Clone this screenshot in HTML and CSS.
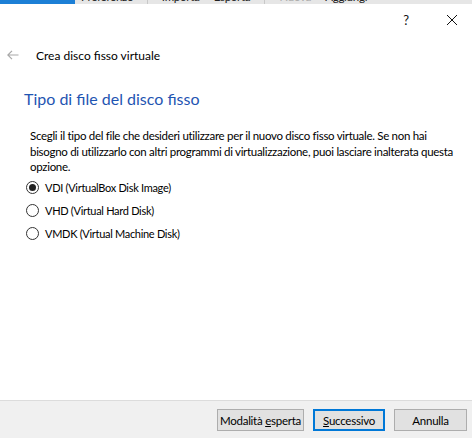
FILE: index.html
```html
<!DOCTYPE html>
<html lang="it">
<head>
<meta charset="utf-8">
<title>Crea disco fisso virtuale</title>
<link rel="stylesheet" href="styles.css">
</head>
<body>
<div class="window">
  <div class="behind">
    <div class="behind-blue"></div>
    <div class="behind-gray"><span>Preferenze</span><span class="sep"></span><span>Importa</span><span>Esporta</span><span class="sep"></span><span class="dim">Nuova</span><span>Aggiungi</span></div>
  </div>
  <div class="titlebar">
    <span class="help">?</span>
    <svg class="close" width="12" height="12" viewBox="0 0 12 12"><path d="M1 1 L11 11 M11 1 L1 11" stroke="#111" stroke-width="1" fill="none"/></svg>
  </div>
  <div class="navrow">
    <svg class="back" width="12" height="10" viewBox="0 0 12 10"><path d="M0.5 5 H11.5 M5 0.8 L0.8 5 L5 9.2" stroke="#a8a8a8" stroke-width="1.2" fill="none"/></svg>
    <span class="navtitle">Crea disco fisso virtuale</span>
  </div>
  <div class="content">
    <h1 class="heading">Tipo di file del disco fisso</h1>
    <p class="desc">Scegli il tipo del file che desideri utilizzare per il nuovo disco fisso virtuale. Se non hai<br>bisogno di utilizzarlo con altri programmi di virtualizzazione, puoi lasciare inalterata questa<br>opzione.</p>
    <div class="options">
      <label class="opt"><span class="radio checked"></span>VDI (VirtualBox Disk Image)</label>
      <label class="opt"><span class="radio"></span>VHD (Virtual Hard Disk)</label>
      <label class="opt"><span class="radio"></span>VMDK (Virtual Machine Disk)</label>
    </div>
  </div>
  <div class="footer">
    <button class="btn btn-expert">Modalità <u>e</u>sperta</button>
    <button class="btn btn-default"><u>S</u>uccessivo</button>
    <button class="btn btn-cancel">Annulla</button>
  </div>
</div>
</body>
</html>
```
FILE: styles.css
```css
* { box-sizing: border-box; }
html, body { margin: 0; padding: 0; }
body {
  width: 472px;
  height: 438px;
  overflow: hidden;
  background: #ffffff;
  font-family: "Segoe UI", Lato, "Noto Sans", "Liberation Sans", sans-serif;
  font-size: 11.5px;
  letter-spacing: -0.25px;
  color: #000;
}
.window {
  display: flex;
  flex-direction: column;
  height: 438px;
}
.behind {
  display: flex;
  height: 4px;
  overflow: hidden;
  flex: none;
}
.behind-blue { width: 75px; background: #1c7fd6; }
.behind-gray {
  flex: 1;
  background: #e6e6e6;
  display: flex;
  gap: 14px;
  padding-left: 6px;
  line-height: 12px;
  white-space: nowrap;
}
.behind-gray span { margin-top: -9px; color: #222; }
.behind-gray .dim { color: #aaa; }
.behind-gray .sep { width: 1px; background: #c8c8c8; margin-top: 0; height: 4px; }
.titlebar {
  height: 32px;
  flex: none;
  display: flex;
  align-items: center;
  justify-content: flex-end;
  padding-right: 14px;
  gap: 37px;
}
.help { font-size: 13px; color: #111; letter-spacing: 0; }
.close { display: block; }
.navrow {
  display: flex;
  align-items: center;
  height: 26px;
  margin-top: 6px;
  padding-left: 7px;
  flex: none;
}
.back { display: block; margin-right: 17px; }
.navtitle { font-size: 12px; letter-spacing: 0; color: #000; }
.content {
  padding-left: 24px;
  padding-right: 0;
  flex: 1;
}
.heading {
  margin: 21px 0 0 0;
  font-size: 16px;
  letter-spacing: 0;
  font-weight: normal;
  color: #1f55b2;
  line-height: 20px;
}
.desc {
  margin: 19px 0 0 6px;
  line-height: 15.5px;
  color: #000;
  white-space: nowrap;
  letter-spacing: -0.3px;
}
.options {
  margin: 5px 0 0 2px;
  display: flex;
  flex-direction: column;
  gap: 7px;
  font-size: 11px;
  letter-spacing: -0.3px;
}
.opt {
  display: flex;
  align-items: center;
  height: 16px;
  gap: 6px;
}
.radio {
  width: 13px;
  height: 13px;
  border: 1px solid #333;
  border-radius: 50%;
  background: #fff;
  display: flex;
  align-items: center;
  justify-content: center;
}
.radio.checked::after {
  content: "";
  width: 7px;
  height: 7px;
  border-radius: 50%;
  background: #222;
}
.footer {
  flex: none;
  height: 38px;
  background: #f0f0f0;
  border-top: 1px solid #dcdcdc;
  display: flex;
  justify-content: flex-end;
  align-items: flex-start;
  padding-top: 8px;
  padding-right: 5px;
  gap: 9px;
}
.btn {
  height: 22px;
  border: 1px solid #adadad;
  background: #e1e1e1;
  font-family: inherit;
  font-size: 11.5px;
  letter-spacing: -0.25px;
  color: #000;
  padding: 0;
  margin: 0;
  white-space: nowrap;
  overflow: hidden;
}
.btn-expert { width: 87px; }
.btn-default { width: 72px; border: 2px solid #0078d7; }
.btn-cancel { width: 73px; }
```
